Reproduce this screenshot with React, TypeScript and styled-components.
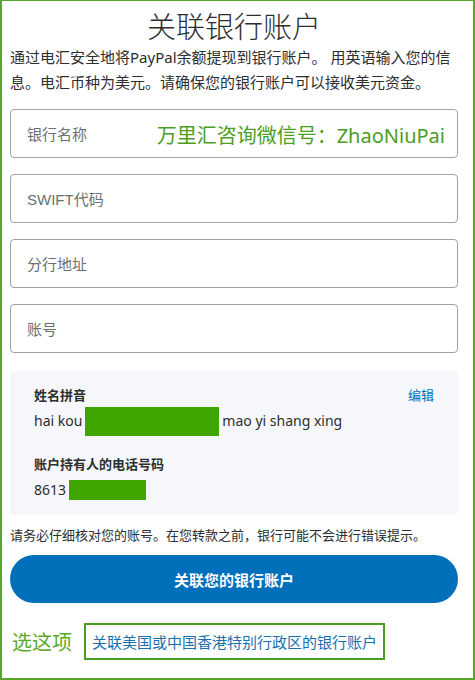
import React from 'react';
import styled, { createGlobalStyle } from 'styled-components';

const GlobalStyle = createGlobalStyle`
  html, body {
    margin: 0;
    padding: 0;
    background: #fff;
  }
  body {
    font-family: 'Noto Sans', 'Noto Sans CJK SC', sans-serif;
    color: #2c2e2f;
  }
`;

const FIELDS = ['银行名称', 'SWIFT代码', '分行地址', '账号'];

const App = () => {
  return (
    <>
      <GlobalStyle />
      <Frame>
        <Title>关联银行账户</Title>
        <Intro>
          通过电汇安全地将PayPal余额提现到银行账户。 用英语输入您的信息。电汇币种为美元。请确保您的银行账户可以接收美元资金。
        </Intro>
        <FieldList>
          {FIELDS.map((label, idx) => (
            <Field key={label}>
              <Placeholder>{label}</Placeholder>
              {idx === 0 && <Watermark>万里汇咨询微信号：ZhaoNiuPai</Watermark>}
            </Field>
          ))}
        </FieldList>
        <InfoPanel>
          <InfoHead>
            <InfoLabel>姓名拼音</InfoLabel>
            <EditLink>编辑</EditLink>
          </InfoHead>
          <InfoValue>
            hai kou
            <Redact width={134} height={29} />
            mao yi shang xing
          </InfoValue>
          <InfoLabel $gap>账户持有人的电话号码</InfoLabel>
          <InfoValue>
            8613
            <Redact width={77} height={20} $tight />
          </InfoValue>
        </InfoPanel>
        <Notice>请务必仔细核对您的账号。在您转款之前，银行可能不会进行错误提示。</Notice>
        <PrimaryButton>关联您的银行账户</PrimaryButton>
        <OptionRow>
          <OptionHint>选这项</OptionHint>
          <OptionLink>关联美国或中国香港特别行政区的银行账户</OptionLink>
        </OptionRow>
      </Frame>
    </>
  );
};

const Frame = styled.div`
  box-sizing: border-box;
  width: 475px;
  height: 680px;
  border: 2px solid #58a626;
  border-top-width: 1px;
  padding: 0 15px 0 8px;
  display: flex;
  flex-direction: column;
  overflow: hidden;
`;

const Title = styled.h1`
  margin: 4px 0 0;
  text-align: center;
  font-family: 'Noto Sans CJK SC', sans-serif;
  font-size: 29px;
  font-weight: 300;
  line-height: 40px;
  color: #2c2e2f;
`;

const Intro = styled.p`
  margin: 0;
  font-size: 15px;
  line-height: 25px;
  color: #2c2e2f;
`;

const FieldList = styled.div`
  margin-top: 14px;
  display: flex;
  flex-direction: column;
  gap: 16px;
`;

const Field = styled.div`
  position: relative;
  box-sizing: border-box;
  height: 49px;
  border: 1px solid #9da3a6;
  border-radius: 4px;
  padding: 0 16px;
  display: flex;
  align-items: center;
`;

const Placeholder = styled.span`
  font-family: 'Liberation Sans', 'Noto Sans CJK SC', sans-serif;
  font-size: 15px;
  color: #687173;
`;

const Watermark = styled.span`
  position: absolute;
  right: 12px;
  top: 50%;
  transform: translateY(-50%);
  font-size: 20px;
  color: #4c9e1e;
  white-space: nowrap;
`;

const InfoPanel = styled.section`
  margin-top: 18px;
  box-sizing: border-box;
  height: 144px;
  padding: 14px 24px 0;
  background: #f5f7fa;
  border-radius: 4px;
  display: flex;
  flex-direction: column;
`;

const InfoHead = styled.div`
  display: flex;
  justify-content: space-between;
  align-items: center;
`;

const InfoLabel = styled.div<{ $gap?: boolean }>`
  margin-top: ${(p) => (p.$gap ? '19px' : '0')};
  font-size: 13px;
  font-weight: 700;
  line-height: 18px;
  color: #2c2e2f;
`;

const EditLink = styled.span`
  font-size: 13px;
  color: #0070ba;
`;

const InfoValue = styled.div`
  margin-top: 2px;
  font-size: 14px;
  line-height: 30px;
  height: 30px;
  display: flex;
  align-items: center;
  white-space: pre;
`;

const Redact = styled.span<{ width: number; height: number; $tight?: boolean }>`
  display: inline-block;
  width: ${(p) => p.width}px;
  height: ${(p) => p.height}px;
  margin: ${(p) => (p.$tight ? '0 0 0 3px' : '0 3px 0 3px')};
  background: #3fa500;
`;

const Notice = styled.p`
  margin: 11px 0 0;
  font-size: 13px;
  line-height: 18px;
  color: #2c2e2f;
`;

const PrimaryButton = styled.button`
  margin-top: 11px;
  width: 100%;
  height: 48px;
  border: none;
  border-radius: 24px;
  background: #0070ba;
  color: #fff;
  font-family: 'Noto Sans CJK SC', sans-serif;
  font-size: 15px;
  font-weight: 700;
`;

const OptionRow = styled.div`
  margin-top: 20px;
  padding-left: 2px;
  display: flex;
  align-items: center;
  gap: 12px;
`;

const OptionHint = styled.span`
  font-size: 20px;
  color: #5aaa2a;
`;

const OptionLink = styled.span`
  box-sizing: border-box;
  height: 37px;
  padding: 0 6px;
  border: 2px solid #4a9e1d;
  display: flex;
  align-items: center;
  font-size: 15px;
  color: #1a6fb0;
`;

export default App;
